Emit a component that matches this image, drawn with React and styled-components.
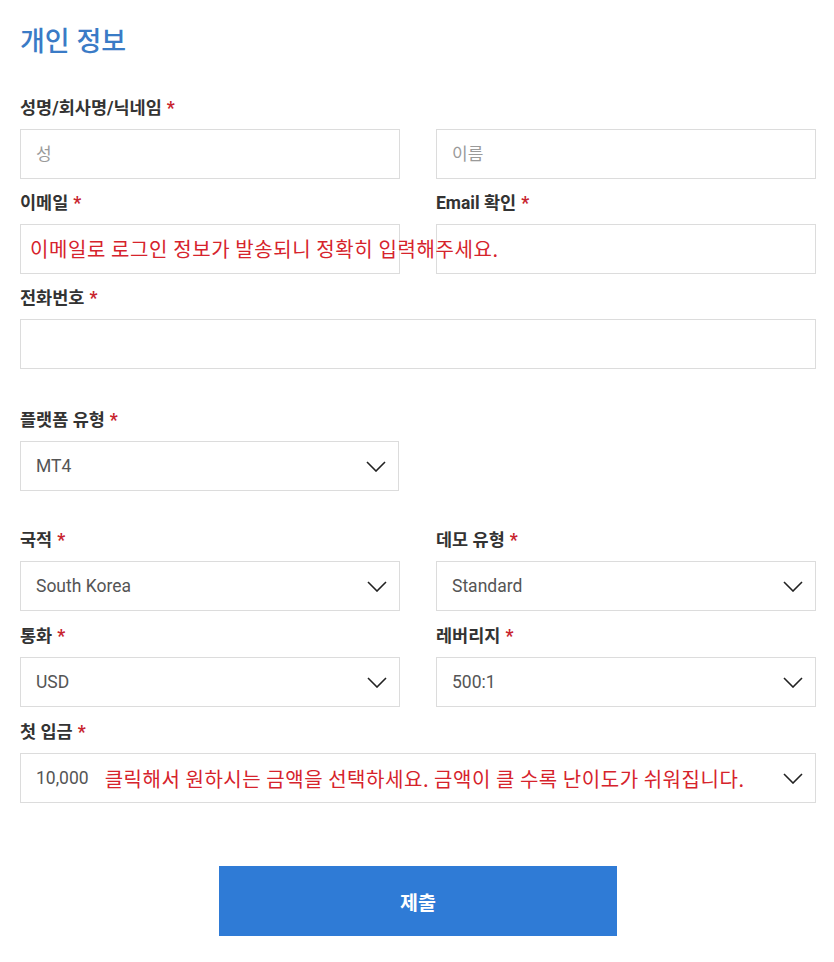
import React from "react";
import styled, { createGlobalStyle } from "styled-components";

const Global = createGlobalStyle`
  html, body { margin: 0; padding: 0; background: #fff; }
  body { font-family: Roboto, "Noto Sans CJK KR", sans-serif; }
  * { box-sizing: border-box; }
`;

const Page = styled.form`
  width: 796px;
  margin-left: 20px;
  padding-top: 26px;
  padding-bottom: 27px;
`;

const Title = styled.h2`
  margin: 0 0 40px;
  font-family: Roboto, "Noto Sans CJK KR", sans-serif;
  font-weight: 500;
  font-size: 27px;
  line-height: 32px;
  color: #3a7bc6;
`;

const Section = styled.div`
  display: flex;
  flex-direction: column;
  gap: ${(p) => p.$gap || 14}px;
  margin-bottom: ${(p) => p.$after}px;
`;

const Row = styled.div`
  position: relative;
  display: grid;
  grid-template-columns: ${(p) => (p.$full ? "1fr" : p.$half ? "379px" : "1fr 1fr")};
  column-gap: 36px;
`;

const Field = styled.div`
  display: flex;
  flex-direction: column;
  gap: 10px;
`;

const Label = styled.label`
  font-family: Roboto, "Noto Sans CJK KR", sans-serif;
  font-weight: 700;
  font-size: 17.5px;
  line-height: 21px;
  height: 21px;
  color: #333;
`;

const Star = styled.span`
  color: #c8242e;
  margin-left: 5px;
`;

const Input = styled.input`
  height: 50px;
  width: 100%;
  border: 1px solid #dcdcdc;
  background: #fff;
  padding: 0 15px;
  font-family: Roboto, "Noto Sans CJK KR", sans-serif;
  font-size: 17px;
  color: #555;
  outline: none;
  &::placeholder { color: #9a9a9a; }
`;

const Select = styled.div`
  height: 50px;
  border: 1px solid #dcdcdc;
  background: #fff;
  padding: 0 12px 0 15px;
  display: flex;
  align-items: center;
  font-family: Roboto, "Noto Sans CJK KR", sans-serif;
  font-size: 17.5px;
  color: #555;
`;

const Value = styled.span`
  flex: 1;
  display: flex;
  align-items: center;
  white-space: nowrap;
`;

const Hint = styled.span`
  font-family: "Noto Sans CJK KR", sans-serif;
  font-size: 20px;
  color: #d6232c;
  margin-left: 16px;
  letter-spacing: 0.55px;
`;

const OverlayHint = styled.span`
  position: absolute;
  left: 10px;
  bottom: 13px;
  font-family: "Noto Sans CJK KR", sans-serif;
  font-size: 20px;
  line-height: 24px;
  letter-spacing: 0.6px;
  color: #d6232c;
  white-space: nowrap;
  pointer-events: none;
`;

const Submit = styled.button`
  display: block;
  margin: 0 auto;
  width: 398px;
  height: 70px;
  border: none;
  background: #2f7bd6;
  color: #fff;
  font-family: Roboto, "Noto Sans CJK KR", sans-serif;
  font-weight: 700;
  font-size: 19.5px;
  cursor: pointer;
`;

const Chevron = () => (
  <svg width="20" height="11" viewBox="0 0 20 11" fill="none">
    <path d="M1 1 L10 10 L19 1" stroke="#222" strokeWidth="1.6" />
  </svg>
);

const F = ({ label, children }) => (
  <Field>
    <Label>
      {label}
      <Star>*</Star>
    </Label>
    {children}
  </Field>
);

const Sel = ({ children }) => (
  <Select>
    <Value>{children}</Value>
    <Chevron />
  </Select>
);

export default function App() {
  return (
    <>
      <Global />
      <Page onSubmit={(e) => e.preventDefault()}>
        <Title>개인 정보</Title>
        <Section $after={41}>
          <Row>
            <F label="성명/회사명/닉네임">
              <Input placeholder="성" />
            </F>
            <Field>
              <Label />
              <Input placeholder="이름" />
            </Field>
          </Row>
          <Row>
            <F label="이메일">
              <Input />
            </F>
            <F label="Email 확인">
              <Input />
            </F>
            <OverlayHint>이메일로 로그인 정보가 발송되니 정확히 입력해주세요.</OverlayHint>
          </Row>
          <Row $full>
            <F label="전화번호">
              <Input />
            </F>
          </Row>
        </Section>
        <Section $after={39}>
          <Row $half>
            <F label="플랫폼 유형">
              <Sel>MT4</Sel>
            </F>
          </Row>
        </Section>
        <Section $after={63} $gap={15}>
          <Row>
            <F label="국적">
              <Sel>South Korea</Sel>
            </F>
            <F label="데모 유형">
              <Sel>Standard</Sel>
            </F>
          </Row>
          <Row>
            <F label="통화">
              <Sel>USD</Sel>
            </F>
            <F label="레버리지">
              <Sel>500:1</Sel>
            </F>
          </Row>
          <Row $full>
            <F label="첫 입금">
              <Sel>
                10,000
                <Hint>클릭해서 원하시는 금액을 선택하세요. 금액이 클 수록 난이도가 쉬워집니다.</Hint>
              </Sel>
            </F>
          </Row>
        </Section>
        <Submit type="submit">제출</Submit>
      </Page>
    </>
  );
}
